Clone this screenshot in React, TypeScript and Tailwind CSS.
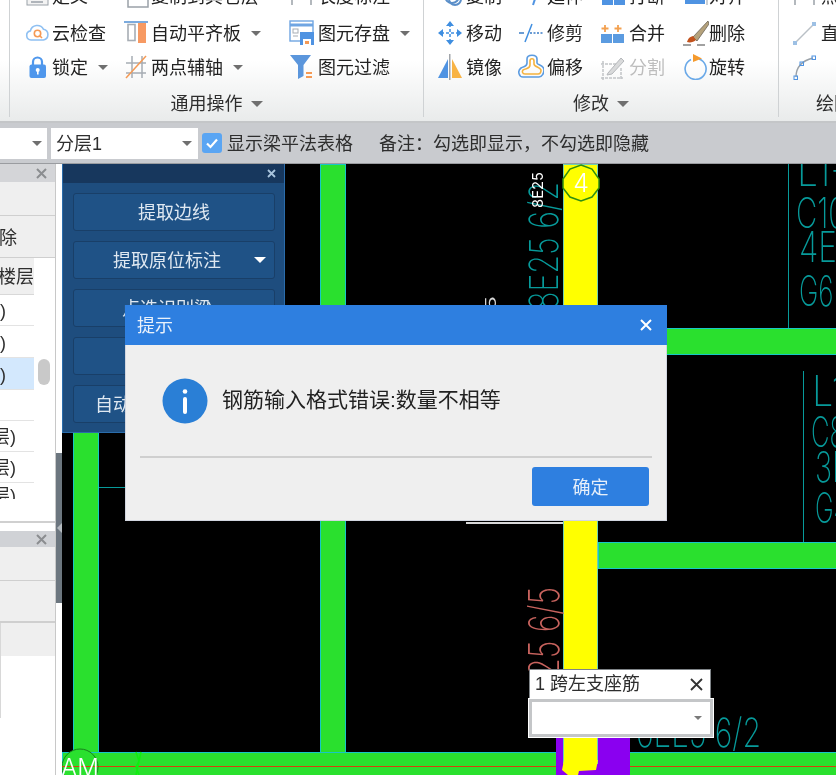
import React from "react";

const CJK = "font-['Liberation_Sans','Noto_Sans_CJK_SC',sans-serif]";

const BLUE = "#4f93e2";
const ORANGE = "#f59a55";
const GRAY = "#9aa1a8";

function Ic({ children, w = 26, h = 26 }: { children: React.ReactNode; w?: number; h?: number }) {
  return (
    <svg width={w} height={h} viewBox={`0 0 ${w} ${h}`} fill="none" className="block">
      {children}
    </svg>
  );
}

const icons: Record<string, React.ReactNode> = {
  doc: (
    <Ic>
      <rect x="3" y="4" width="21" height="18" fill="#f3f3f3" stroke={GRAY} />
      <path d="M7 19h12" stroke={GRAY} strokeWidth="1.5" />
    </Ic>
  ),
  doc2: (
    <Ic>
      <rect x="4" y="2" width="20" height="22" fill="#fff" stroke={GRAY} strokeWidth="1.5" />
    </Ic>
  ),
  ticks: (
    <Ic>
      <path d="M3 2v20M22 2v20" stroke={GRAY} strokeWidth="1.5" />
    </Ic>
  ),
  copy: (
    <Ic>
      <circle cx="15" cy="13" r="7" stroke="#5b8fc9" strokeWidth="2" />
      <circle cx="18" cy="16" r="6" stroke="#5b8fc9" strokeWidth="2" />
    </Ic>
  ),
  extend: (
    <Ic>
      <path d="M19 10l-4 12" stroke={BLUE} strokeWidth="2" />
    </Ic>
  ),
  breakI: (
    <Ic>
      <rect x="2" y="8" width="11" height="14" fill={BLUE} />
      <rect x="14" y="8" width="11" height="14" fill={BLUE} />
    </Ic>
  ),
  align: (
    <Ic>
      <rect x="2" y="6" width="20" height="15" fill={BLUE} />
      <path d="M24 4v18" stroke={GRAY} />
    </Ic>
  ),
  cloud: (
    <Ic>
      <path d="M7 20a4.6 4.6 0 0 1-.6-9.1A7 7 0 0 1 19.4 9.2 5.5 5.5 0 0 1 19.5 20Z" fill="#fff" stroke="#8fc0f2" strokeWidth="1.6" />
      <circle cx="13.5" cy="13.5" r="3.2" stroke={ORANGE} strokeWidth="1.6" />
      <path d="M16 16l2 2" stroke={ORANGE} strokeWidth="1.6" />
    </Ic>
  ),
  autoAlign: (
    <Ic>
      <path d="M0 2h24" stroke="#5b96d6" strokeWidth="1.6" />
      <rect x="4" y="4.5" width="7" height="16" stroke="#a7adb4" strokeWidth="1.6" />
      <rect x="14" y="3" width="8" height="20" fill="#f79a63" />
    </Ic>
  ),
  saveEl: (
    <Ic>
      <rect x="1" y="1" width="23" height="20" fill="#fff" stroke="#6fa5e2" strokeWidth="1.4" />
      <path d="M1 5h23" stroke="#6fa5e2" strokeWidth="3" />
      <rect x="4" y="9" width="5" height="4" stroke="#a7adb4" />
      <path d="M4 16h5" stroke="#a7adb4" />
      <rect x="11" y="12" width="14" height="13" fill="#4f93e2" />
      <rect x="14" y="19" width="8" height="6" fill="#fff" />
      <rect x="16" y="21" width="4" height="3" fill={ORANGE} />
    </Ic>
  ),
  lock: (
    <Ic>
      <path d="M9 11V8a4.5 4.5 0 0 1 9 0v3" stroke="#4f97ec" strokeWidth="2.2" />
      <rect x="5.5" y="10.5" width="16.5" height="13.5" rx="2" fill="#4f97ec" />
      <circle cx="13.7" cy="16" r="2" fill="#fff" />
      <rect x="13" y="16" width="1.6" height="4.5" fill="#fff" />
    </Ic>
  ),
  twoAxis: (
    <Ic>
      <path d="M2 9h20M2 19h20M8 2v22M18 2v22" stroke="#a7adb4" strokeWidth="1.5" />
      <path d="M2 24L22 2" stroke={ORANGE} strokeWidth="1.5" />
    </Ic>
  ),
  filter: (
    <Ic>
      <path d="M1 1h21l-7.5 10v11l-5.5 3V11Z" fill="#5b96dc" />
      <path d="M17 19h6M17 23h6" stroke={ORANGE} strokeWidth="1.8" />
    </Ic>
  ),
  move: (
    <Ic>
      <path d="M13 4v18M4 13h18" stroke="#3f8ee0" strokeWidth="1.5" strokeDasharray="3 2" />
      <path d="M13 1l4 5H9ZM13 25l-4-5h8ZM1 13l5-4v8ZM25 13l-5 4V9Z" fill="#3f8ee0" />
    </Ic>
  ),
  trim: (
    <Ic>
      <path d="M1 13h5" stroke="#3a7cc6" strokeWidth="1.5" />
      <path d="M14 4L7 22" stroke="#3f8ee0" strokeWidth="1.5" />
      <path d="M12 13h13" stroke="#3a7cc6" strokeWidth="1.5" strokeDasharray="2 1.5" />
    </Ic>
  ),
  merge: (
    <Ic>
      <path d="M5 5v7M1.5 8.5h7M18 5v7M14.5 8.500h7" stroke="#f3a04f" strokeWidth="1.8" />
      <rect x="1" y="14" width="11" height="9" fill="#5b9be0" />
      <rect x="13" y="14" width="11" height="9" fill="#5b9be0" />
    </Ic>
  ),
  erase: (
    <Ic>
      <path d="M25 1L10 17l4 4L26 4Z" fill="#b5a27c" stroke="#6b6255" strokeWidth="0.8" />
      <path d="M10 16c-4 1-5 3-6 6 3 1 7 0 9-2Z" fill="#c2521c" />
      <path d="M0 25h8M14 25h8" stroke="#444" strokeWidth="1.2" />
    </Ic>
  ),
  mirror: (
    <Ic>
      <path d="M11 5L1 24h10Z" fill="#4f93e2" />
      <path d="M15 5l10 19H15Z" fill="#f8b344" />
      <path d="M12.800 0v26" stroke="#8a8f95" strokeWidth="1.2" />
    </Ic>
  ),
  offset: (
    <Ic>
      <path d="M9 5c0-5 10-5 10 0v4c0 2 7 2 7 7 0 3-2 7-5 7H5c-4 0-6-6-2-9 3-2 6-1 6-5Z" stroke="#5b9be0" strokeWidth="1.6" />
      <path d="M12 7c0-3 4-3 4 0v3c0 3 6 3 7 6 0 2-1 4-3 4H7c-3 0-3-3-2-4 3-2 7-1 7-5Z" stroke="#f4b23f" strokeWidth="1.6" />
    </Ic>
  ),
  split: (
    <Ic>
      <path d="M1 10h16M1 24h22M3 7v19M21 14v12" stroke="#c2c5c8" strokeWidth="1.5" strokeDasharray="3 1" />
      <path d="M8 19L21 4l3 3-12 13-5 1Z" fill="#d9dadb" stroke="#b5b8bb" />
    </Ic>
  ),
  rotate: (
    <Ic>
      <path d="M8 5.500A10.500 10.500 0 1 0 16 5" stroke="#6aa9e8" strokeWidth="1.6" />
      <path d="M10 0l9 4.500L10 8Z" fill="#f59a2d" />
    </Ic>
  ),
  line: (
    <Ic>
      <path d="M3 23L22 4" stroke="#b9c0c6" strokeWidth="1.4" />
      <rect x="1" y="21" width="4" height="4" fill="#9dc0e4" />
      <rect x="20" y="2" width="4" height="4" fill="#9dc0e4" />
    </Ic>
  ),
  arc: (
    <Ic>
      <path d="M4 23C4 13 9 7 21 4" stroke="#9aa1a8" strokeWidth="1.4" />
      <rect x="2" y="22" width="3.500" height="3.500" stroke="#4f93e2" />
      <rect x="8" y="8" width="3.500" height="3.500" stroke="#4f93e2" />
      <rect x="20" y="2" width="3.500" height="3.500" stroke="#4f93e2" />
    </Ic>
  ),
};

function Caret({ color = "#6f6f6f", w = 5 }: { color?: string; w?: number }) {
  return (
    <svg width={w * 2} height={w} viewBox="0 0 10 5" className="block shrink-0">
      <path d="M0 0h10L5 5Z" fill={color} />
    </svg>
  );
}

function Item({ icon, w, label, caret, off, top }: { icon: string; w: number; label?: string; caret?: boolean; off?: boolean; top?: boolean }) {
  return (
    <div className={`flex items-center h-[34px] ${top ? "-translate-y-[3px]" : ""}`}>
      <div className="flex items-center shrink-0" style={{ width: w }}>
        {icons[icon]}
      </div>
      {label && <span className={`text-[18px] leading-none whitespace-nowrap pt-[2px] ${off ? "text-[#bdbdbd]" : "text-[#222]"}`}>{label}</span>}
      {caret && (
        <span className="ml-[10px]">
          <Caret />
        </span>
      )}
    </div>
  );
}

function GroupLabel({ text }: { text: string }) {
  return (
    <div className="flex items-center justify-center h-[38px] gap-[8px] text-[18px] text-[#2e2e2e] whitespace-nowrap pt-[2px]">
      {text}
      <Caret w={6} />
    </div>
  );
}

function Ribbon() {
  return (
    <div className="h-[123px] shrink-0 overflow-hidden flex bg-gradient-to-b from-white from-50% to-[#e9ebeb] border-b-[2px] border-[#c4c6c8]">
      <div className="w-[10px] shrink-0 mb-[4px] border-r border-[#cfd2d4]" />
      {/* 通用操作 */}
      <div className="w-[413px] shrink-0 -mt-[18px]">
        <div className="grid grid-cols-[100px_165px_1fr] pl-[14px]">
          <Item top icon="doc" w={28} label="定义" />
          <Item top icon="doc2" w={27} label="复制到其它层" caret />
          <Item top icon="ticks" w={29} label="长度标注" caret />
          <Item icon="cloud" w={28} label="云检查" />
          <Item icon="autoAlign" w={27} label="自动平齐板" caret />
          <Item icon="saveEl" w={29} label="图元存盘" caret />
          <Item icon="lock" w={28} label="锁定" caret />
          <Item icon="twoAxis" w={27} label="两点辅轴" caret />
          <Item icon="filter" w={29} label="图元过滤" />
        </div>
        <GroupLabel text="通用操作" />
      </div>
      <div className="w-px shrink-0 mb-[4px] bg-[#cfd2d4]" />
      {/* 修改 */}
      <div className="w-[354px] shrink-0 -mt-[18px]">
        <div className="grid grid-cols-[81px_82px_83px_1fr] pl-[13px]">
          <Item top icon="copy" w={29} label="复制" />
          <Item top icon="extend" w={29} label="延伸" />
          <Item top icon="breakI" w={29} label="打断" />
          <Item top icon="align" w={26} label="对齐" caret />
          <Item icon="move" w={29} label="移动" />
          <Item icon="trim" w={29} label="修剪" />
          <Item icon="merge" w={29} label="合并" />
          <Item icon="erase" w={26} label="删除" />
          <Item icon="mirror" w={29} label="镜像" />
          <Item icon="offset" w={29} label="偏移" />
          <Item icon="split" w={29} label="分割" off />
          <Item icon="rotate" w={26} label="旋转" />
        </div>
        <GroupLabel text="修改" />
      </div>
      <div className="w-px shrink-0 mb-[4px] bg-[#cfd2d4]" />
      {/* 绘图 */}
      <div className="flex-1 -mt-[18px] pl-[13px] overflow-hidden">
        <Item top icon="ticks" w={29} label="点" />
        <Item icon="line" w={29} label="直线" />
        <Item icon="arc" w={29} />
        <div className="h-[38px] flex items-center pl-[24px] pt-[2px] text-[18px] text-[#2e2e2e] whitespace-nowrap">绘图</div>
      </div>
    </div>
  );
}

function Toolbar() {
  return (
    <div className="h-[41px] shrink-0 bg-[#c9cbcf] flex items-center text-[18px] text-[#2e2e2e] border-b border-[#9a9ca0]">
      <div className="w-[47px] h-[31px] bg-white flex items-center justify-end pr-[5px]">
        <Caret />
      </div>
      <div className="ml-[4px] w-[147px] h-[31px] bg-white flex items-center justify-between pl-[5px] pr-[6px]">
        <span className="pt-[2px]">分层1</span>
        <Caret />
      </div>
      <div className="ml-[4px] w-[20px] h-[20px] rounded-[3px] bg-[#5aa5f3] flex items-center justify-center">
        <svg width="14" height="14" viewBox="0 0 14 14" fill="none">
          <path d="M2 7.500l3.500 3.500L12 3.500" stroke="#fff" strokeWidth="2.200" />
        </svg>
      </div>
      <span className="ml-[5px] pt-[2px] whitespace-nowrap">显示梁平法表格</span>
      <span className="ml-[26px] pt-[2px] whitespace-nowrap">{"备注\uFF1A勾选即显示\uFF0C不勾选即隐藏"}</span>
    </div>
  );
}

function PanelClose() {
  return (
    <svg width="11" height="11" viewBox="0 0 11 11" className="block">
      <path d="M1 1l9 9M10 1l-9 9" stroke="#8b8d90" strokeWidth="2" />
    </svg>
  );
}

function ListRow({ text, sel, h = 31, end = 28 }: { text?: string; sel?: boolean; h?: number; end?: number }) {
  return (
    <div
      className={`w-[34px] flex items-center justify-end overflow-hidden whitespace-nowrap border-b border-[#e3e3e3] ${sel ? "bg-[#d3e8fd]" : "bg-white"}`}
      style={{ height: h, paddingRight: end }}
    >
      <span className="pt-[3px]">{text}</span>
    </div>
  );
}

function LeftPanel() {
  return (
    <div className="w-[56px] shrink-0 bg-white border-r border-[#c8c8c8] flex flex-col text-[18px] text-[#2e2e2e] overflow-hidden">
      <div className="h-[18px] bg-[#d4d5d8] flex items-center justify-end pr-[8px] shrink-0">
        <PanelClose />
      </div>
      <div className="h-[34px] bg-[#efefef] border-b border-[#cfcfcf] shrink-0" />
      <div className="h-[42px] bg-[#efefef] border-b border-[#cfcfcf] flex items-center justify-end pr-[38px] pt-[3px] shrink-0 overflow-hidden whitespace-nowrap">
        删除
      </div>
      <div className="relative flex-none h-[265px] border-b-[2px] border-[#d0d0d0]">
        <div className="w-[34px] h-[37px] bg-[#efefef] border-b border-[#d8d8d8] flex items-center justify-end overflow-hidden whitespace-nowrap pt-[3px]">
          楼层
        </div>
        <ListRow text="第1层)" />
        <ListRow text="第2层)" h={32} />
        <ListRow text="第3层)" sel h={32} />
        <ListRow />
        <ListRow text="(第4层)" end={18} />
        <ListRow text="(第5层)" end={18} />
        <div className="w-[34px] h-[16px] pr-[18px] overflow-hidden flex justify-end whitespace-nowrap leading-[26px]">(第6层)</div>
        <div className="absolute left-[38px] top-[101px] w-[12px] h-[26px] rounded-[6px] bg-[#c9c9c9]" />
      </div>
      <div className="h-[8px] shrink-0" />
      <div className="h-[16px] bg-[#d0d2d6] flex items-center justify-end pr-[8px] shrink-0">
        <PanelClose />
      </div>
      <div className="h-[34px] bg-[#efefef] border-b border-[#cfcfcf] shrink-0" />
      <div className="h-[42px] bg-[#efefef] border-b-[2px] border-[#cfcfcf] shrink-0" />
      <div className="h-[33px] bg-[#efefef] shrink-0 border-l border-[#d8d8d8]" />
      <div className="h-[62px] bg-white shrink-0 border-l border-[#d8d8d8]" />
    </div>
  );
}

function Splitter() {
  return (
    <div className="w-[6px] shrink-0 bg-white flex flex-col">
      <div className="h-[289px] shrink-0" />
      <div className="h-[150px] shrink-0 bg-[#6c767f] flex items-center justify-center">
        <svg width="5" height="10" viewBox="0 0 5 10">
          <path d="M5 0v10L0 5Z" fill="#b5bbc0" />
        </svg>
      </div>
    </div>
  );
}

const CYAN = "#17c7c7";
const TEAL = "#079a9a";

function CadText({ x, y, rotate = 0, len, size, color, children, weight = 200 }: { x: number; y: number; rotate?: number; len: number; size: number; color: string; children: string; weight?: number }) {
  return (
    <text
      transform={`translate(${x} ${y}) rotate(${rotate})`}
      textLength={len}
      lengthAdjust="spacingAndGlyphs"
      fontSize={size}
      fill={color}
      fontWeight={weight}
      fontFamily="Inter, 'Liberation Sans', sans-serif"
    >
      {children}
    </text>
  );
}

function Beam({ x, y, w, h, fill = "#2ae02e", edge = CYAN }: { x: number; y: number; w: number; h: number; fill?: string; edge?: string }) {
  return <rect x={x + 0.5} y={y + 0.5} width={w - 1} height={h - 1} fill={fill} stroke={edge} />;
}

function CadCanvas() {
  return (
    <svg width="774" height="611" viewBox="62 164 774 611" className="block absolute left-0 top-0">
      <rect x="62" y="164" width="774" height="611" fill="#000" />
      <Beam x={73} y={164} w={26} h={589} />
      <Beam x={320} y={164} w={26} h={589} />
      <Beam x={598} y={328} w={240} h={27} />
      <Beam x={598} y={542} w={240} h={27} />
      <Beam x={62} y={752} w={776} h={30} />
      <path d="M99 487.500h30" stroke={TEAL} />
      <rect x="466" y="522" width="98" height="2" fill="#d8d8d8" />
      <path d="M788.500 164v164M803.500 371v171" stroke={TEAL} />
      <path d="M62 766.500h774" stroke="#d8400c" />

      <rect x="556" y="730" width="74" height="45" fill="#8a00f0" />
      <Beam x={563} y={164} w={35} h={600} fill="#ffff00" edge="#6fd0b0" />
      <path d="M564 760h34l-2 10-17 1-1 4h-10l-6-5Z" fill="#ffff00" />
      <path d="M136 752l3 9-3 6 3 8M141 752l-5 23" stroke="#10ee10" strokeWidth="1.500" fill="none" />

      <polygon points="581,165 592,169 599,179 599,188 592,197 581,201 570,197 563,188 563,179 570,169" fill="#ffff00" stroke="#2f8f10" strokeWidth="1.500" />
      <text x="581" y="192" fontSize="25" fill="#fff" textAnchor="middle" fontFamily="Inter, sans-serif" fontWeight="300">4</text>

      <CadText x={558} y={310} rotate={-90} len={128} size={40} color={TEAL}>8E25 6/2</CadText>
      <CadText x={543} y={208} rotate={-90} len={36} size={15} color="#ffffff" weight={400}>8E25</CadText>
      <CadText x={496} y={310} rotate={-90} len={14} size={15} color="#d8d8d8" weight={400}>5</CadText>
      <CadText x={559} y={677} rotate={-90} len={90} size={42} color="#c8635e">25 6/5</CadText>
      <CadText x={636} y={747} len={125} size={40} color={TEAL}>6EE5 6/2</CadText>

      <CadText x={797} y={186} len={50} size={42} color={TEAL}>L1-</CadText>
      <CadText x={796} y={228} len={50} size={42} color={TEAL}>C10</CadText>
      <CadText x={799} y={262} len={50} size={42} color={TEAL}>4E1</CadText>
      <CadText x={799} y={306} len={50} size={42} color={TEAL}>G6E</CadText>
      <CadText x={812} y={406} len={34} size={42} color={TEAL}>L1</CadText>
      <CadText x={811} y={447} len={34} size={42} color={TEAL}>C8</CadText>
      <CadText x={815} y={482} len={34} size={42} color={TEAL}>3E</CadText>
      <CadText x={815} y={523} len={34} size={42} color={TEAL}>G4</CadText>

      <circle cx="80" cy="767" r="18" fill="#2ae02e" stroke="#177f1c" />
      <path d="M62 766.500h36" stroke="#d8400c" />
      <text x="80" y="776" fontSize="24" fill="#fff" textAnchor="middle" fontFamily="Inter, sans-serif" fontWeight="300">AM</text>
    </svg>
  );
}

function IdButton({ text, caret, offset = 0 }: { text: string; caret?: boolean; offset?: number }) {
  return (
    <div className="relative h-[38px] rounded-[3px] bg-[#1f5286] border border-[#193f68] flex items-center justify-center pt-[3px] text-[18px] text-[#dfe8f1]">
      <span className="whitespace-nowrap" style={{ marginLeft: offset }}>{text}</span>
      {caret && (
        <span className="absolute right-[8px] top-[15px]">
          <Caret color="#fff" w={6} />
        </span>
      )}
    </div>
  );
}

function BluePanel() {
  return (
    <div className="absolute left-0 top-0 w-[223px] h-[269px] bg-[#1e4d7e] border-x border-b border-[#2a6cab]">
      <div className="h-[19px] bg-[#17375d] flex items-center justify-end pr-[8px]">
        <svg width="9" height="9" viewBox="0 0 9 9">
          <path d="M1 1l7 7M8 1l-7 7" stroke="#a9c4dd" strokeWidth="1.800" />
        </svg>
      </div>
      <div className="flex flex-col gap-[10px] pt-[10px] pl-[10px] pr-[9px]">
        <IdButton text="提取边线" />
        <IdButton text="提取原位标注" caret offset={-14} />
        <IdButton text="点选识别梁" caret offset={-14} />
        <IdButton text="校核梁图元" />
        <IdButton text="自动识别原位标注" caret offset={-14} />
      </div>
    </div>
  );
}

function Dialog() {
  return (
    <div className="absolute left-[125px] top-[305px] w-[542px] h-[216px] bg-[#efefef] border-x border-b border-[#d2d6e0] flex flex-col">
      <div className="h-[40px] shrink-0 -mx-px bg-[#2e7fe0] flex items-center justify-between pl-[12px] pr-[15px] text-[18px] text-[#e9f1fb]">
        <span className="pt-[2px]">提示</span>
        <svg width="12" height="12" viewBox="0 0 12 12">
          <path d="M1 1l10 10M11 1L1 11" stroke="#fff" strokeWidth="2" />
        </svg>
      </div>
      <div className="h-[113px] shrink-0 mx-[14px] border-b-[2px] border-[#cfcfcf] flex items-start pl-[22px] pt-[33px] gap-[14px]">
        <svg width="46" height="46" viewBox="0 0 46 46" className="block shrink-0">
          <circle cx="23" cy="23" r="22.500" fill="#2a7fd6" />
          <circle cx="23" cy="13.500" r="2.300" fill="#fff" />
          <rect x="21" y="19" width="4" height="17" rx="2" fill="#fff" />
        </svg>
        <span className="text-[21px] text-[#222] whitespace-nowrap pt-[6px]">钢筋输入格式错误:数量不相等</span>
      </div>
      <div className="flex justify-end pt-[9px] pr-[17px]">
        <button className="w-[117px] h-[39px] rounded-[3px] bg-[#2e7fe0] pt-[4px] text-[18px] text-[#e6effa] flex items-center justify-center">确定</button>
      </div>
    </div>
  );
}

function RebarInput() {
  return (
    <div className="absolute left-[529px] top-[669px] w-[184px]">
      <div className="h-[30px] mr-[2px] bg-white border border-[#7f8488] flex items-center justify-between pl-[5px] pr-[7px] pt-[1px] text-[18px] text-[#2e2e2e]">
        <span className="whitespace-nowrap">1 跨左支座筋</span>
        <svg width="13" height="13" viewBox="0 0 13 13">
          <path d="M1 1l11 11M12 1L1 12" stroke="#333" strokeWidth="1.800" />
        </svg>
      </div>
      <div className="h-[38px] bg-white border-[3px] border-[#c4c6c8] outline outline-1 outline-white flex items-center justify-end pr-[8px]">
        <Caret color="#7a7a7a" w={4} />
      </div>
    </div>
  );
}

export default function App() {
  return (
    <div className={`relative w-[836px] h-[775px] overflow-hidden flex flex-col bg-white blur-[0.4px] ${CJK}`}>
      <Ribbon />
      <Toolbar />
      <div className="flex flex-1 min-h-0">
        <LeftPanel />
        <Splitter />
        <div className="relative flex-1 overflow-hidden">
          <CadCanvas />
          <BluePanel />
        </div>
      </div>
      <RebarInput />
      <Dialog />
    </div>
  );
}
